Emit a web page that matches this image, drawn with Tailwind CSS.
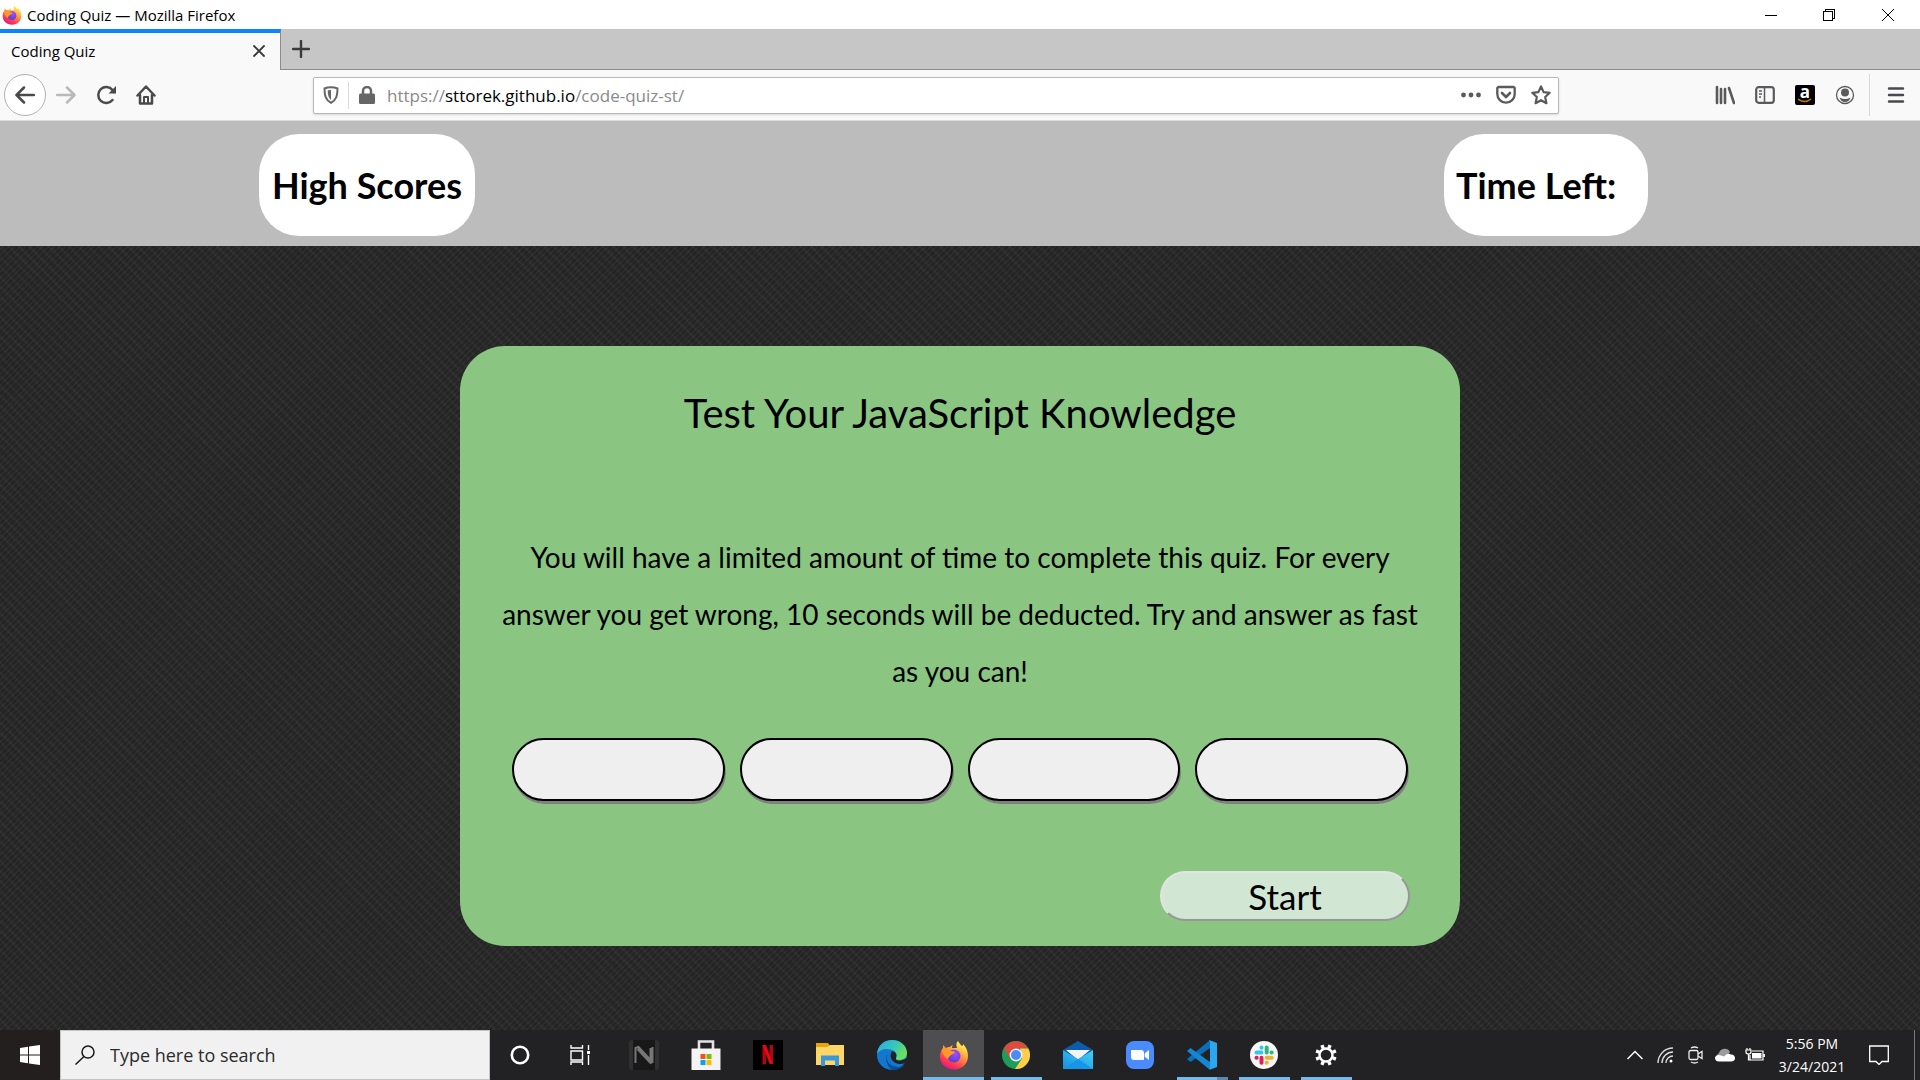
<!DOCTYPE html>
<html lang="en">
<head>
<meta charset="utf-8">
<title>Coding Quiz</title>
<script src="https://cdn.jsdelivr.net/npm/@tailwindcss/browser@4"></script>
</head>
<body class="flex min-h-screen flex-col bg-[#2b2b2b] font-['Open_Sans',sans-serif] text-black">

<!-- shared icon definitions -->
<svg class="absolute size-0" aria-hidden="true">
  <defs>
    <linearGradient id="ffBody" x1="0.8" y1="0.1" x2="0.3" y2="1"><stop offset="0" stop-color="#fff44f"/><stop offset=".4" stop-color="#ff9640"/><stop offset=".75" stop-color="#ff3a4f"/><stop offset="1" stop-color="#e31587"/></linearGradient>
    <radialGradient id="ffGlobe" cx=".6" cy=".3" r=".8"><stop offset="0" stop-color="#a74bff"/><stop offset="1" stop-color="#4b3ec8"/></radialGradient>
    <linearGradient id="edgeTop" x1="0" y1="0" x2="1" y2=".5"><stop offset="0" stop-color="#2fa8e8"/><stop offset=".6" stop-color="#35c8b8"/><stop offset="1" stop-color="#6fdf5a"/></linearGradient>
    <linearGradient id="mailBody" x1="0" y1="1" x2="1" y2="0"><stop offset="0" stop-color="#1a8fe0"/><stop offset="1" stop-color="#3fd0fa"/></linearGradient>
    <symbol id="firefox" viewBox="0 0 30 30">
      <path fill="url(#ffBody)" d="M19 1c1 2 2 3 4 5 1 0 1-1 1-2 3 3 5 7 5 12 0 8-6 13.500-14 13.500S1 24 1 16.500C1 13 2 10 4 8V5l3 3c1-1 3-1 4-1 1-1 2-2 3-2-1 1-1 2-1 3h5c-1-3-1-5 1-7z"/>
      <circle cx="15" cy="16" r="6.500" fill="url(#ffGlobe)"/>
      <path fill="#ff9a2a" d="M3 9c4-1 7 0 9 2 1 0 3 0 4 1-1 2-3 2-4 3-2 1-2 3-4 4-3-3-5-6-5-10z"/>
    </symbol>
  </defs>
</svg>

<!-- window title bar -->
<header class="flex h-[29px] items-center bg-white pr-[2px] pl-[2px]">
  <svg class="size-5"><use href="#firefox"/></svg>
  <span class="ml-[5px] text-[15px] leading-5">Coding Quiz — Mozilla Firefox</span>
  <div class="ml-auto flex">
    <button class="flex h-7 w-[58px] items-center justify-center" aria-label="Minimize"><svg class="size-3" stroke="#000" fill="none" shape-rendering="crispEdges"><path d="M0 6.500h12"/></svg></button>
    <button class="flex h-7 w-[58px] items-center justify-center" aria-label="Restore"><svg class="size-3" stroke="#000" fill="none" shape-rendering="crispEdges"><path d="M.5 2.500h9v9h-9zM2.500 2V.5h9v9h-2"/></svg></button>
    <button class="flex h-7 w-[60px] items-center justify-center" aria-label="Close"><svg class="size-3" stroke="#000" fill="none"><path d="M0 0l12 12M12 0L0 12"/></svg></button>
  </div>
</header>

<!-- tab strip -->
<div class="flex h-[41px] bg-[#c6c6c6]">
  <div class="flex w-[281px] items-center border-t-4 border-r border-t-[#0a84ff] border-r-[#8c8c8c] bg-[#f9f9fa] pb-[2px] pl-[11px]">
    <span class="text-[15px] leading-5">Coding Quiz</span>
    <button class="mr-[15px] ml-auto" aria-label="Close tab"><svg class="size-3" stroke="#3a3a3c" stroke-width="1.800" stroke-linecap="round"><path d="M1 1l10 10M11 1L1 11"/></svg></button>
  </div>
  <div class="flex flex-1 items-center border-b border-[#8c8c8c] pl-[11px]">
    <button aria-label="New tab"><svg class="size-[18px]" stroke="#3a3a3c" stroke-width="2.400" stroke-linecap="round"><path d="M9 1v16M1 9h16"/></svg></button>
  </div>
</div>

<!-- navigation toolbar -->
<nav class="flex h-[51px] items-center border-b border-[#dcdcdc] bg-[#f9f9fa] pl-1">
  <div class="flex items-center">
    <button class="flex size-[42px] items-center justify-center rounded-full border border-[#b1b1b3] bg-white" aria-label="Back"><svg class="size-5" viewBox="0 0 20 20" fill="none" stroke="#4a4a4c" stroke-width="2.500" stroke-linecap="round" stroke-linejoin="round"><path d="M19 10H2M9 2.500L1.500 10 9 17.500"/></svg></button>
    <button class="flex w-10 justify-center" aria-label="Forward"><svg class="size-5" viewBox="0 0 20 20" fill="none" stroke="#b9b9bb" stroke-width="2.500" stroke-linecap="round" stroke-linejoin="round"><path d="M1 10h17M11 2.500l7.500 7.500-7.500 7.500"/></svg></button>
    <button class="flex w-10 justify-center" aria-label="Reload"><svg class="size-5" viewBox="0 0 20 20" fill="none" stroke="#4a4a4c" stroke-width="2.500" stroke-linecap="round"><path d="M16.500 15a8 8 0 1 1 0-10l1.500 2"/><path d="M20 1v7.500h-7.500z" fill="#4a4a4c" stroke="none"/></svg></button>
    <button class="flex w-10 justify-center" aria-label="Home"><svg class="size-5" viewBox="0 0 20 20" fill="none" stroke="#4a4a4c" stroke-width="2.500" stroke-linecap="round" stroke-linejoin="round"><path d="M1.500 10.500L10 1.500l8.500 9M4 10v8.500h12V10"/><path d="M8 18v-6h4v6" stroke-width="2"/></svg></button>
  </div>
  <div class="ml-[147px] flex h-[37px] max-w-[1246px] flex-1 items-center rounded-xs border border-[#b8b8ba] bg-white shadow-sm">
    <button class="ml-[9px]" aria-label="Tracking protection"><svg class="h-[18px] w-4" viewBox="0 0 16 18" fill="none" stroke="#666" stroke-width="2"><path d="M8 1.200c2.500 0 4.500.4 6.500 1.300 0 7-1 11.500-6.500 14.300C2.500 14 1.500 9.500 1.500 2.500 3.500 1.600 5.500 1.200 8 1.200z"/><path fill="#666" stroke="none" d="M8 4v10C5.500 12 4.700 9 4.700 4.500 6 4.100 7 4 8 4z"/></svg></button>
    <span class="ml-[9px] h-[27px] w-px bg-[#dcdcdc]"></span>
    <button class="ml-[10px]" aria-label="Connection secure"><svg class="h-[18px] w-4" viewBox="0 0 16 18"><path fill="none" stroke="#666" stroke-width="2.500" d="M4 9V5a4 4 0 0 1 8 0v4"/><rect y="7.500" width="16" height="10.500" rx="1.500" fill="#666"/></svg></button>
    <div role="textbox" contenteditable="true" aria-label="Address" class="ml-3 flex-1 pt-[2px] text-[17px] leading-6 text-[#8a8a8a] outline-none">https://<span class="text-black">sttorek.github.io</span>/code-quiz-st/</div>
    <div class="flex items-center gap-[15px] pr-[7px]">
      <button aria-label="Page actions"><svg class="size-5" fill="#5a5a5c"><circle cx="2.500" cy="10" r="2.400"/><circle cx="10" cy="10" r="2.400"/><circle cx="17.500" cy="10" r="2.400"/></svg></button>
      <button aria-label="Save to Pocket"><svg class="size-5" fill="none" stroke="#5a5a5c" stroke-width="2.300" stroke-linecap="round" stroke-linejoin="round"><path d="M2.500 2h15l1.200 1v6a8.700 8.700 0 0 1-17.400 0V3z"/><path d="M6 8l4 4 4-4" stroke-width="2.600"/></svg></button>
      <button aria-label="Bookmark this page"><svg class="size-5" fill="none" stroke="#5a5a5c" stroke-width="2.200" stroke-linejoin="round"><path d="M10 1.500l2.600 5.600 6.100.7-4.500 4.200 1.200 6.200-5.400-3-5.400 3 1.200-6.200L1.300 7.800l6.100-.7z"/></svg></button>
    </div>
  </div>
  <div class="ml-auto flex h-full items-center">
    <button class="flex w-10 justify-center" aria-label="Library"><svg class="size-5" fill="none" stroke="#5a5a5c" stroke-width="2.600" stroke-linecap="round"><path d="M2 2v16M6 4v14M10 4v14M14 3l5 15"/></svg></button>
    <button class="flex w-10 justify-center" aria-label="Sidebars"><svg class="size-5" fill="none" stroke="#5a5a5c" stroke-width="2.200"><rect x="1.200" y="2.200" width="17.600" height="15.600" rx="2.500"/><path d="M9.500 2v16M4 6h3M4 9h3M4 12h2" stroke-width="1.500"/></svg></button>
    <button class="flex w-10 justify-center" aria-label="Amazon"><span class="relative flex size-5 justify-center rounded-xs bg-black font-['Open_Sans',sans-serif] text-[17px] leading-[14px] font-bold text-white">a<svg class="absolute bottom-[2px] left-[3px] h-[5px] w-[14px]" fill="none" stroke="#c77a0a" stroke-width="1.500"><path d="M0 1q7 5 13 0"/></svg></span></button>
    <button class="flex w-10 justify-center" aria-label="Account"><svg class="size-5" fill="#5a5a5c"><circle cx="10" cy="10" r="8.500" fill="none" stroke="#5a5a5c" stroke-width="1.300"/><circle cx="10" cy="7.500" r="4"/><path d="M4.500 12.500q5.500 3 11 0-1.500 4.500-5.500 4.500t-5.500-4.500z"/></svg></button>
    <span class="ml-1 h-[42px] w-px bg-[#d7d7d8]"></span>
    <button class="mr-[14px] ml-4 flex w-5 justify-center" aria-label="Menu"><svg class="size-5" stroke="#4a4a4c" stroke-width="2.400" stroke-linecap="round"><path d="M3 3.500h14M3 10h14M3 16.500h14"/></svg></button>
  </div>
</nav>

<!-- quiz page -->
<section class="flex flex-1 flex-col bg-[#292929] bg-[repeating-linear-gradient(45deg,#ffffff09_0px,#ffffff00_2px,#00000018_4px,#ffffff00_7px),repeating-linear-gradient(135deg,#00000012_0px,#00000012_2px,#ffffff05_2px,#ffffff05_4px)] font-['Lato',sans-serif]">
  <div class="flex justify-between bg-[#bcbcbc] pt-[13px] pr-[272px] pb-[10px] pl-[259px]">
    <a href="#scores" class="flex h-[102px] w-[216px] items-center justify-center rounded-[40px] bg-white text-[36px] leading-10 font-bold">High Scores</a>
    <p class="flex h-[102px] w-[204px] items-center rounded-[40px] bg-white pl-3 text-[36px] leading-10 font-bold">Time Left:</p>
  </div>
  <main class="mx-auto mt-[100px] mb-[84px] flex min-h-[600px] w-full max-w-[1000px] flex-col rounded-[45px] bg-[#8ac582] px-[40px]">
    <h1 class="mt-[41px] text-center text-[40px] leading-[52px]">Test Your JavaScript Knowledge</h1>
    <p class="mt-[90px] text-center text-[28px] leading-[57px]">You will have a limited amount of time to complete this quiz. For every answer you get wrong, 10 seconds will be deducted. Try and answer as fast as you can!</p>
    <div class="mt-[38px] grid grid-cols-4 gap-[15px] px-[12px]">
      <button class="h-[63px] rounded-full border-2 border-black bg-[#efefef] shadow-[1px_3px_0_#808080]" aria-label="Answer 1"></button>
      <button class="h-[63px] rounded-full border-2 border-black bg-[#efefef] shadow-[1px_3px_0_#808080]" aria-label="Answer 2"></button>
      <button class="h-[63px] rounded-full border-2 border-black bg-[#efefef] shadow-[1px_3px_0_#808080]" aria-label="Answer 3"></button>
      <button class="h-[63px] rounded-full border-2 border-black bg-[#efefef] shadow-[1px_3px_0_#808080]" aria-label="Answer 4"></button>
    </div>
    <button class="mt-[70px] mr-[10px] h-[50px] w-[250px] self-end rounded-full border-2 border-t-[#e3e3e3] border-r-[#979797] border-b-[#979797] border-l-[#e3e3e3] bg-[#d1e7d3] text-[35px] leading-10">Start</button>
  </main>
</section>

<!-- taskbar -->
<footer class="flex h-[50px] items-stretch bg-[#222123] text-white">
  <button class="flex w-[60px] items-center justify-center bg-[#231f1f]" aria-label="Start menu"><svg class="size-5" fill="#fff"><path d="M0 3l8-1.200v7.700H0zM9 1.600L20 0v9.500H9zM0 10.500h8v7.700L0 17zM9 10.500h11V20L9 18.400z"/></svg></button>
  <label class="flex w-[430px] items-center border border-[#c4c4c4] bg-[#f1f1f1] pl-[14px] text-[#2b2b2b]">
    <svg class="size-5 shrink-0" fill="none" stroke="#1a1a1a" stroke-width="1.500"><circle cx="13" cy="7" r="6"/><path d="M9 11.500L.5 19.500"/></svg>
    <input type="search" placeholder="Type here to search" aria-label="Search" class="ml-[15px] w-full bg-transparent text-[18px] leading-6 outline-none placeholder:text-[#2b2b2b]">
  </label>
  <button class="flex w-[60px] items-center justify-center" aria-label="Cortana"><svg class="size-5" fill="none" stroke="#fff" stroke-width="2.600"><circle cx="10" cy="10" r="8.200"/></svg></button>
  <button class="mr-[3px] flex w-[60px] items-center justify-center" aria-label="Task view"><svg class="size-5" fill="none" stroke="#fff" stroke-width="1.400"><path d="M1 6h11.500v9H1zM1 0v3h11.500V0M1 20v-3h11.500v3M18.500 0v5M18.500 10v10"/><path fill="#fff" stroke="none" d="M17 6h3v3h-3z"/></svg></button>

  <button class="flex w-[62px] items-center justify-center" aria-label="N app"><svg class="size-[30px]"><rect width="30" height="30" rx="3" fill="#303030"/><rect x="4" width="22" height="30" fill="#181818"/><path d="M6.500 23V8l3-1 12 13V8M23.500 7v15l-2 1L8.500 9" fill="none" stroke="#777" stroke-width="2"/></svg></button>
  <button class="flex w-[62px] items-center justify-center" aria-label="Microsoft Store"><svg class="size-[30px]"><path d="M8 9V1.500h14V9" fill="none" stroke="#e4e4e4" stroke-width="2.600"/><path fill="#f3f3f3" d="M.5 8.500h29V30H.5z"/><path fill="#f25022" d="M9.500 14h5v5h-5z"/><path fill="#7fba00" d="M15.500 14h5v5h-5z"/><path fill="#00a4ef" d="M9.500 20h5v5h-5z"/><path fill="#ffb900" d="M15.500 20h5v5h-5z"/></svg></button>
  <button class="flex w-[62px] items-center justify-center" aria-label="Netflix"><svg class="size-[30px]"><path d="M0 0h30v30H0z"/><path fill="#b1060f" d="M9.500 5H13v19l-3.500.5zM16.500 5H20v19l-3.500-.5z"/><path fill="#e50914" d="M9.500 5H13l7 19-3.500-.3z"/></svg></button>
  <button class="flex w-[62px] items-center justify-center" aria-label="File Explorer"><svg class="size-[30px]"><path fill="#e5a50b" d="M1 3h12l2 3v4H1z"/><path fill="#fdd766" d="M1 7h11l3-2h14v20H1z"/><path fill="#3a96dd" d="M6 15.500h18V26h-4v-5.500H10V26H6z"/></svg></button>
  <button class="flex w-[62px] items-center justify-center" aria-label="Edge"><svg class="size-[30px]"><circle cx="15" cy="15" r="15" fill="#1278cf"/><path fill="url(#edgeTop)" d="M0 14C1 5 7 0 15 0c9 0 15 6 15 13 0 5-4 7-8 7-3 0-4-1-3-2 2-3 0-7-4-8C9 8 3 9 0 14z"/><path fill="#0d4f97" d="M11 13c-3 5 0 14 10 14 3 0 5-1 7-3-3 4-7 6-13 6-5-4-8-11-4-17z"/><path fill="#222123" d="M15 11c4 1 5 4 4 7-1 3 5 4 11 0 0 2-1 4-2 5-6 3-13-1-14-5-1-3 0-5 1-7z"/></svg></button>
  <button class="relative flex w-[62px] items-center justify-center border-r border-[#222123] bg-[#4e4d4f]" aria-label="Firefox"><svg class="size-[30px]"><use href="#firefox"/></svg><span class="absolute inset-x-0 bottom-0 h-[3px] bg-[#76b9ed]"></span></button>
  <button class="relative flex w-[62px] items-center justify-center" aria-label="Chrome"><svg class="size-7" viewBox="0 0 28 28"><circle cx="14" cy="14" r="14" fill="#1e9c5b"/><path fill="#dd4b3e" d="M1.900 7A14 14 0 0 1 26.100 7.500H14L8 17.500z"/><path fill="#ffcd46" d="M26.300 7.500A14 14 0 0 1 13 28l7-10.500-2-10z"/><circle cx="14" cy="14" r="6.500" fill="#f1f1f1"/><circle cx="14" cy="14" r="5" fill="#4c8bf5"/></svg><span class="absolute bottom-0 h-[3px] w-[51px] bg-[#76b9ed]"></span></button>
  <button class="flex w-[62px] items-center justify-center" aria-label="Mail"><svg class="size-[30px]"><path fill="#0b5cad" d="M0 10L15 1l15 9-15 9z"/><path fill="#f3f3f3" d="M3 10h24L15 20z"/><path fill="url(#mailBody)" d="M0 10l15 9 15-9v19H0z"/><path fill="#1795e8" d="M15 19l15 10H0z"/></svg></button>
  <button class="flex w-[62px] items-center justify-center" aria-label="Zoom"><svg class="size-7"><rect width="28" height="28" rx="8" fill="#4a8cff"/><path fill="#fff" d="M5 9h10a3 3 0 0 1 3 3v7H8a3 3 0 0 1-3-3zM18.700 12.500L23 9v10l-4.300-3.200z"/></svg></button>
  <button class="relative flex w-[62px] items-center justify-center" aria-label="Visual Studio Code"><svg class="size-[30px]"><path fill="#0a6eb8" d="M0 19l3.500 3L23 8V0z"/><path fill="#1387d2" d="M0 11l3.500-3L23 22v8z"/><path fill="#2ba6f0" d="M22 0l8 3v24l-8 3c1 0 1-1 1-2V2z"/></svg><span class="absolute bottom-0 flex h-[3px] w-[51px] bg-[#5a88b0]"><span class="h-full w-10 bg-[#76b9ed]"></span></span></button>
  <button class="relative flex w-[62px] items-center justify-center" aria-label="Slack"><svg class="size-7"><circle cx="14" cy="14" r="14" fill="#f6f6f6"/><g fill="none" stroke-width="4" stroke-linecap="round"><path stroke="#36c5f0" d="M6.500 11.500h5M11.500 6.500v.2"/><path stroke="#2eb67d" d="M16.700 6.500v5M21.500 11.500h.2"/><path stroke="#ecb22e" d="M16.700 16.700h5M16.700 21.700v-.2"/><path stroke="#e01e5a" d="M11.500 16.700v5M6.500 16.700h.2"/></g></svg><span class="absolute bottom-0 h-[3px] w-[51px] bg-[#76b9ed]"></span></button>
  <button class="relative flex w-[62px] items-center justify-center" aria-label="Settings"><svg class="size-6" fill="none" stroke="#fff"><circle cx="12" cy="12" r="6.500" stroke-width="2.400"/><path stroke-width="3.400" d="M18.700 14.800l3.200 1.300M14.800 18.700l1.300 3.200M9.200 18.700l-1.300 3.200M5.300 14.800l-3.200 1.300M5.300 9.200L2.100 7.900M9.200 5.300L7.900 2.100M14.800 5.300l1.300-3.200M18.700 9.200l3.200-1.300"/></svg><span class="absolute bottom-0 h-[3px] w-[51px] bg-[#76b9ed]"></span></button>

  <div class="ml-auto flex items-center">
    <button class="flex w-[30px] justify-center" aria-label="Show hidden icons"><svg class="h-[10px] w-4" fill="none" stroke="#fff" stroke-width="1.500"><path d="M.5 9L8 1.500 15.500 9"/></svg></button>
    <button class="flex w-[30px] justify-center" aria-label="Network"><svg class="size-4" fill="none" stroke="#ddd" stroke-width="1.400"><path d="M1 16A15 15 0 0 1 16 1M5 16A11 11 0 0 1 16 5M9 16a7 7 0 0 1 7-7"/><circle cx="14" cy="14" r="1.500" fill="#fff" stroke="none"/></svg></button>
    <button class="flex w-[30px] justify-center" aria-label="Meet now"><svg class="h-[18px] w-4" fill="none" stroke="#eee" stroke-width="1.300"><rect x="2" y="4.500" width="9" height="9" rx="1.500"/><path d="M11 8l4-2.500v7L11 10M4 2q3.500-2 7 0M4 16q3.500 2 7 0"/></svg></button>
    <button class="flex w-[30px] justify-center" aria-label="OneDrive"><svg class="h-[14px] w-5"><path fill="#9b9b9b" d="M4 12a4 4 0 0 1 0-7 6 6 0 0 1 11-1l-5 6z"/><path fill="#fff" d="M4 13.500q-4 0-4-4c1-3 4-3 6-2l3 1q3-4 7-2c3 0 4 2 4 4s-2 3-4 3z"/></svg></button>
    <button class="flex w-[30px] justify-center" aria-label="Battery"><svg class="h-[14px] w-5" fill="none" stroke="#fff" stroke-width="1.200"><path d="M7 3h11v9H5V7M1 2h5v2q0 2-2.500 2T1 4zM2 0v2M5 0v2M3.500 6v6H5M19.300 6v3"/><path fill="#fff" stroke="none" d="M7 5h9.500v5.500H7z"/></svg></button>
    <time datetime="2021-03-24T17:56" class="w-[84px] text-center text-[14px] leading-[23px]">5:56 PM<br>3/24/2021</time>
    <button class="flex w-[50px] justify-center" aria-label="Notifications"><svg class="size-5" fill="none" stroke="#fff" stroke-width="1.300"><path d="M.7 1h18.600v15.500H13l-3 3-3-3H.7z"/></svg></button>
    <span class="mr-[5px] ml-[10px] h-[50px] w-px bg-[#77777a]"></span>
  </div>
</footer>
</body>
</html>
